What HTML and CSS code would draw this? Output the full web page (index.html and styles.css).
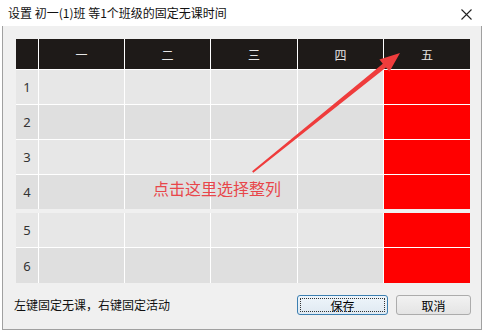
FILE: index.html
```html
<!DOCTYPE html>
<html lang="zh-CN">
<head>
    <meta charset="UTF-8">
    <title>设置固定无课时间</title>
    <link rel="stylesheet" href="styles.css">
</head>
<body>
<div class="window">
    <div class="titlebar">
        <span class="title">设置 初一(1)班 等1个班级的固定无课时间</span>
        <svg class="close" width="11" height="11" viewBox="0 0 11 11">
            <path d="M0.5 0.5 L10.5 10.5 M10.5 0.5 L0.5 10.5" stroke="#222" stroke-width="1.1" fill="none"/>
        </svg>
    </div>
    <div class="content">
        <div class="grid top">
            <div class="head"></div>
            <div class="head">一</div>
            <div class="head">二</div>
            <div class="head">三</div>
            <div class="head">四</div>
            <div class="head">五</div>

            <div class="num light">1</div>
            <div class="cell light"></div><div class="cell light"></div><div class="cell light"></div><div class="cell light"></div><div class="cell on"></div>
            <div class="num dark">2</div>
            <div class="cell dark"></div><div class="cell dark"></div><div class="cell dark"></div><div class="cell dark"></div><div class="cell on"></div>
            <div class="num light">3</div>
            <div class="cell light"></div><div class="cell light"></div><div class="cell light"></div><div class="cell light"></div><div class="cell on"></div>
            <div class="num dark">4</div>
            <div class="cell dark"></div><div class="cell dark"></div><div class="cell dark"></div><div class="cell dark"></div><div class="cell on"></div>
        </div>
        <div class="grid bottom">
            <div class="num light">5</div>
            <div class="cell light"></div><div class="cell light"></div><div class="cell light"></div><div class="cell light"></div><div class="cell on"></div>
            <div class="num dark">6</div>
            <div class="cell dark"></div><div class="cell dark"></div><div class="cell dark"></div><div class="cell dark"></div><div class="cell on"></div>
        </div>
        <div class="footer">
            <span class="hint">左键固定无课，右键固定活动</span>
            <button class="btn primary"><span class="focus">保存</span></button>
            <button class="btn">取消</button>
        </div>
    </div>

    <svg class="arrow" width="485" height="331" viewBox="0 0 485 331">
        <polygon fill="#ef3c3c" points="252.1,171.2 382.8,63.7 379.4,59.4 400,53 389.4,71.8 386,67.5 253.3,172.8"/>
    </svg>
    <div class="note">点击这里选择整列</div>
</div>
</body>
</html>
```

FILE: styles.css
```css
* {
    margin: 0;
    padding: 0;
    box-sizing: border-box;
}

body {
    width: 485px;
    height: 331px;
    background: #fff;
    font-family: "Noto Sans CJK SC", "Noto Sans", sans-serif;
    font-size: 12px;
    color: #000;
    overflow: hidden;
}

.window {
    position: relative;
    width: 485px;
    height: 331px;
    display: flex;
    flex-direction: column;
}

.titlebar {
    height: 26px;
    display: flex;
    align-items: center;
    justify-content: space-between;
    padding: 0 13px 0 8px;
    background: #fff;
}

.title {
    font-size: 12px;
    line-height: 14px;
    color: #111;
}

.close {
    margin-top: 3px;
}

.content {
    margin-left: 2px;
    width: 480px;
    height: 304px;
    background: #f0f0f0;
    border: 1px solid #a0a0a0;
    border-top: none;
    padding: 13px 10px 0 11px;
}

.grid {
    margin-left: 2px;
    width: 454px;
    display: grid;
    grid-template-columns: 22px 85px 85px 86px 85px 86px;
    gap: 1px;
    background: #fff;
}

.grid.top {
    grid-template-rows: 30px 34px 34px 34px 34px;
}

.grid.bottom {
    margin-top: 4px;
    grid-template-rows: 34px 35px;
}

.head {
    background: #1e1a18;
    color: #e6e6e6;
    display: flex;
    align-items: center;
    justify-content: center;
    font-size: 12px;
}

.num {
    display: flex;
    align-items: center;
    justify-content: center;
    font-family: "Noto Sans", sans-serif;
    font-size: 13px;
    color: #333;
}

.light {
    background: #e7e7e7;
}

.dark {
    background: #dfdfdf;
}

.cell.on {
    background: #ff0000;
}

.footer {
    margin-top: 12px;
    height: 20px;
    display: flex;
    align-items: center;
}

.hint {
    flex: 1;
    font-size: 12px;
    line-height: 14px;
    color: #111;
}

.btn {
    height: 20px;
    width: 75px;
    border: 1px solid #acacac;
    border-radius: 3px;
    background: linear-gradient(#f2f2f2, #e4e4e4);
    font-family: "Noto Sans CJK SC", sans-serif;
    font-size: 12px;
    color: #000;
    display: flex;
    align-items: center;
    justify-content: center;
}

.btn.primary {
    width: 91px;
    margin-right: 8px;
    border-color: #3c7fb1;
    background: linear-gradient(#eef5fb, #dfe9f2);
    padding: 2px;
}

.focus {
    width: 100%;
    height: 100%;
    border: 1px dotted #333;
    display: flex;
    align-items: center;
    justify-content: center;
}

.arrow {
    position: absolute;
    top: 0;
    left: 0;
    pointer-events: none;
}

.note {
    position: absolute;
    left: 153px;
    top: 180px;
    font-size: 16px;
    line-height: 16px;
    color: #e8464a;
}
```
